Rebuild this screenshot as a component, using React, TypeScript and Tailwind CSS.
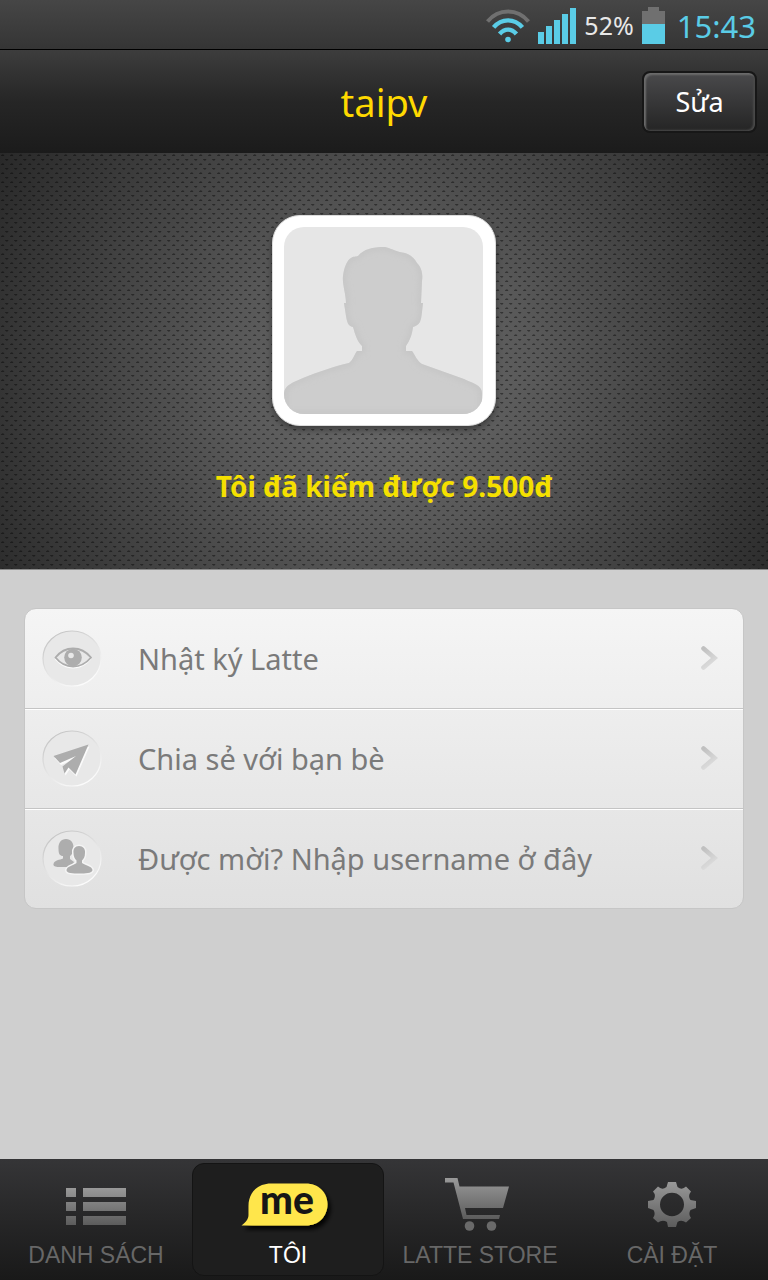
import type { ReactNode } from 'react';
import clsx from 'clsx';

interface MenuItem {
  label: string;
  href: string;
  icon: ReactNode;
}

interface TabItem {
  label: string;
  href: string;
  active?: boolean;
  icon: ReactNode;
}

function WifiIcon() {
  return (
    <svg width="44" height="34" viewBox="0 0 44 34" fill="none" aria-hidden="true">
      <path d="M1.5 12.5C12.5-.8 31.5-.8 42.5 12.5" stroke="#707070" strokeWidth="4" />
      <path d="M7.6 18.4C15.6 9 28.4 9 36.4 18.4" stroke="#5acce6" strokeWidth="4.4" />
      <path d="M13.6 25C18.4 19.2 25.6 19.2 30.4 25" stroke="#5acce6" strokeWidth="4.4" />
      <circle cx="22" cy="30.5" r="2.8" fill="#5acce6" />
    </svg>
  );
}

function SignalIcon() {
  return (
    <svg width="38" height="36" viewBox="0 0 38 36" fill="#5acce6" aria-hidden="true">
      <path d="M0 24h6v12H0zM8 18h6v18H8zM16 12h6v24h-6zM24 6h6v30h-6zM32 0h6v36h-6z" />
    </svg>
  );
}

function BatteryIcon() {
  return (
    <svg width="23" height="37" viewBox="0 0 23 37" aria-hidden="true">
      <path d="M6 0h11v4h6v13H0V4h6z" fill="#707070" />
      <path d="M0 17h23v20H0z" fill="#5acce6" />
    </svg>
  );
}

const personPath =
  'M74 29C80 22 88 20 101 20C109 22 113 25 121 26C127 28 131 32 133 36C138 41 139 48 138 54L137 76H139C138 83 138 90 136 95C134 98 132 99 129 100C128 108 126 113 122 119V124H128C131 128 133 134 138 137L180 152C188 156 198 158 198 166V187H0V166C1 158 8 156 19 151C34 145 51 139 65 136C69 133 70 128 73 124H78V119C73 114 71 107 69 100C64 99 63 95 62 89L60 76H62C62 67 58 57 59 49C60 41 63 33 67 31C69 29 72 30 74 29Z';

function Avatar() {
  return (
    <div className="rounded-[28px] border border-[#dcdcdc] bg-white p-[11px] pr-3 shadow-[0_4px_6px_rgba(0,0,0,0.35)]">
      <svg className="rounded-[20px] bg-[#e6e6e6]" width="199" height="187" viewBox="0 0 199 187" role="img" aria-label="taipv">
        <defs>
          <clipPath id="personClip">
            <path d={personPath} />
          </clipPath>
          <filter id="soft">
            <feGaussianBlur stdDeviation="3" />
          </filter>
        </defs>
        <path d={personPath} fill="#cdcdcd" />
        {/* slightly darker inner edge */}
        <g clipPath="url(#personClip)">
          <path d={personPath} fill="none" stroke="#c2c2c2" strokeWidth="4" filter="url(#soft)" />
        </g>
      </svg>
    </div>
  );
}

// Pressed-in ellipse that holds each menu icon
function IconWell({ children }: { children: ReactNode }) {
  return (
    <svg className="shrink-0" width="60" height="58" viewBox="0 1 60 58" aria-hidden="true">
      <defs>
        <linearGradient id="rim" x1="0.2" y1="0" x2="0.8" y2="1">
          <stop offset="0" stopColor="#c2c2c2" />
          <stop offset="0.5" stopColor="#e4e4e4" />
          <stop offset="1" stopColor="#ffffff" />
        </linearGradient>
      </defs>
      <ellipse cx="30" cy="29.500" rx="29" ry="27.500" fill="#e8e8e8" stroke="url(#rim)" strokeWidth="1.2" />
      {children}
    </svg>
  );
}

function EyeIcon() {
  return (
    <IconWell>
      <path d="M13 29C23 16.5 39 16.5 49 29C39 41 23 41 13 29Z" transform="translate(0 1.5)" fill="#fbfbfb" />
      <path d="M13.5 28.5C23 16.5 39 16.5 49 28.5C39 40.5 23 40.5 13.5 28.5Z" fill="#e8e8e8" stroke="#adadad" strokeWidth="1.8" />
      <circle cx="31" cy="28.5" r="8.8" fill="#adadad" />
      <circle cx="29" cy="26.5" r="2.8" fill="#e8e8e8" />
    </IconWell>
  );
}

const planePath = 'M11.5 27L46.5 15.5L33.5 45.500L26.5 38.5L22.500 44.500L20.500 37.5L34 27L18 34Z';

function PlaneIcon() {
  return (
    <IconWell>
      <path d={planePath} fill="#fbfbfb" transform="translate(1 2)" />
      <path d={planePath} fill="#adadad" />
    </IconWell>
  );
}

const friendBack =
  'M24 10C29 10 31.500 14 31.500 18C31.500 22 30 26 28 27V30L32 33L29 38H17C13 38 11 37 11.500 35C12 31 18 31 21 29.500V27C18 27 16.500 25 16.500 20C16 14 19 10 24 10Z';
const friendFront =
  'M37 17C41 17 43.500 20 43 24C43 28 41.500 30 40 31.500V34C43 36.500 50 37 50.500 41C50 44.500 43 44.500 37.500 44.500C31 44.500 24.500 44.500 24.500 41C25 37 32 36.500 34.500 34V31.500C32.500 30 31.500 27 31.500 24C31 20 33 17 37 17Z';

function FriendsIcon() {
  return (
    <IconWell>
      <path d={friendBack} fill="#adadad" />
      <path d={friendFront} fill="#f4f4f4" stroke="#f4f4f4" strokeWidth="3" />
      <path d={friendFront} fill="#adadad" />
    </IconWell>
  );
}

function Chevron() {
  return (
    <svg className="shrink-0" width="20" height="26" viewBox="0 1 20 26" fill="none" aria-hidden="true">
      <defs>
        <linearGradient id="chev" x1="0" y1="0" x2="0.4" y2="1">
          <stop offset="0" stopColor="#c0c0c0" />
          <stop offset="1" stopColor="#dcdcdc" />
        </linearGradient>
      </defs>
      <path d="M4.500 3.500L15.500 13L4.500 22.500" stroke="url(#chev)" strokeWidth="4.600" strokeLinecap="round" />
    </svg>
  );
}

function TabGradient({ id }: { id: string }) {
  return (
    <defs>
      <linearGradient id={id} x1="0" y1="0" x2="0" y2="1">
        <stop offset="0" stopColor="#999999" />
        <stop offset="1" stopColor="#5c5c5c" />
      </linearGradient>
    </defs>
  );
}

function ListIcon() {
  return (
    <svg width="62" height="56" viewBox="0 0 62 56" aria-hidden="true">
      <TabGradient id="listFill" />
      <path
        fill="url(#listFill)"
        d="M1 11h10v9H1zM18 11h43v9H18zM1 25h10v9H1zM18 25h43v9H18zM1 39h10v9H1zM18 39h43v9H18z"
      />
    </svg>
  );
}

function MeIcon() {
  return (
    <svg width="96" height="56" viewBox="0 0 96 56" aria-hidden="true">
      <defs>
        <filter id="meShadow" x="-20%" y="-20%" width="150%" height="160%">
          <feDropShadow dx="3" dy="4" stdDeviation="2" floodColor="#000" floodOpacity="0.9" />
        </filter>
      </defs>
      <path
        d="M31 6.5H66C78 6.5 87.500 15 87.500 27C87.500 40 78 48.500 66 48.500H1.500C6 45 8.500 42 8.500 38V29C8.500 15 18 6.500 31 6.500Z"
        fill="#ffe64b"
        filter="url(#meShadow)"
      />
      <text x="47" y="37" textAnchor="middle" fontFamily="Lato, sans-serif" fontWeight="900" fontSize="39" fill="#161616">
        me
      </text>
    </svg>
  );
}

function CartIcon() {
  return (
    <svg width="70" height="56" viewBox="0 0 70 56" aria-hidden="true">
      <TabGradient id="cartFill" />
      <path
        fill="url(#cartFill)"
        fillRule="evenodd"
        d="M0 1H12.500L14.500 9.500H64L58 31H20L21.500 38H55L54 42H18L8.500 5.500H0Z"
      />
      <circle cx="24.500" cy="49" r="4.800" fill="#6a6a6a" />
      <circle cx="46.500" cy="49" r="4.800" fill="#6a6a6a" />
    </svg>
  );
}

function GearIcon() {
  return (
    <svg width="50" height="56" viewBox="0 0 50 56" aria-hidden="true">
      <TabGradient id="gearFill" />
      <path
        fill="url(#gearFill)"
        fillRule="evenodd"
        d="M21 5H29L30.5 10Q35 13.5 39 9.5L44 14.5Q40.5 19 43.5 23L49 24V31L43.5 33Q41 37 44 41L39 45.5Q34.5 42.5 30.5 45L29 50H21L20 45Q15.5 42.5 11 45.5L6 41Q9 37 6.5 33L1 31V24L6.5 23Q9.5 18.5 6 14.5L11 9.5Q15 13.5 19.5 10ZM25 15.7a12 11.8 0 1 0 0 23.6a12 11.8 0 1 0 0-23.6Z"
      />
    </svg>
  );
}

const menuItems: MenuItem[] = [
  { label: 'Nhật ký Latte', href: '#diary', icon: <EyeIcon /> },
  { label: 'Chia sẻ với bạn bè', href: '#share', icon: <PlaneIcon /> },
  { label: 'Được mời? Nhập username ở đây', href: '#invited', icon: <FriendsIcon /> },
];

const tabs: TabItem[] = [
  { label: 'DANH SÁCH', href: '#list', icon: <ListIcon /> },
  { label: 'TÔI', href: '#me', active: true, icon: <MeIcon /> },
  { label: 'LATTE STORE', href: '#store', icon: <CartIcon /> },
  { label: 'CÀI ĐẶT', href: '#settings', icon: <GearIcon /> },
];

export default function App() {
  return (
    <div className="flex min-h-screen flex-col bg-[#cfcfcf] font-['Noto_Sans','Open_Sans',sans-serif]">
      {/* Status bar */}
      <div className="flex h-[50px] items-center justify-end border-b border-black bg-linear-to-b from-[#464646] to-[#353535] pt-0.5 pr-3">
        <WifiIcon />
        <span className="ml-2">
          <SignalIcon />
        </span>
        <span className="ml-2 text-[25px] text-[#e8e8e8]">52%</span>
        <span className="ml-2">
          <BatteryIcon />
        </span>
        <time className="ml-3 text-[31px] leading-9 text-[#5acce6]">15:43</time>
      </div>

      {/* Header */}
      <header className="grid h-[103px] grid-cols-3 items-center bg-linear-to-b from-[#3d3d3d] via-[#262626] to-[#1b1b1b] px-[11px]">
        <h1 className="col-start-2 pt-0.5 text-center text-[38px] text-[#ffd900]">taipv</h1>
        <button
          type="button"
          className="h-[62px] w-[115px] justify-self-end rounded-lg border-2 border-[#171717] bg-linear-to-b from-[#4a4a4c] to-[#252525] pt-0.5 text-[27px] text-white shadow-[inset_2px_2px_2px_#6c6c6c,inset_-2px_-1px_2px_#4a4a4a]"
        >
          Sửa
        </button>
      </header>

      {/* Profile */}
      <section className="h-[417px] border-b border-[#8a8a8a] bg-[radial-gradient(ellipse_60%_105%_at_50%_56%,#6a6a6a_0%,#585858_35%,#3e3e3e_70%,#282828_100%)]">
        <div className="flex h-full flex-col items-center bg-[radial-gradient(ellipse_2px_1px_at_30%_25%,rgba(0,0,0,0.42)_60%,transparent),radial-gradient(ellipse_2px_1px_at_75%_75%,rgba(0,0,0,0.42)_60%,transparent)] bg-[size:9px_9px] pt-[62px]">
          <Avatar />
          <p className="mt-10 text-[28px] leading-10 font-bold text-[#f5e000]">Tôi đã kiếm được 9.500đ</p>
        </div>
      </section>

      {/* Menu */}
      <main className="flex-1 px-6 pt-[38px] pb-10">
        <ul className="overflow-hidden rounded-xl border border-[#c6c6c6] bg-linear-to-b from-[#f5f5f5] to-[#e0e0e0]">
          {menuItems.map((item, index) => (
            <li key={item.label} className={clsx(index > 0 && 'border-t border-[#c4c4c4]')}>
              <a
                href={item.href}
                className={clsx(
                  'flex h-[99px] items-center pr-6 pl-[17px] text-[29px] text-[#7a7a7a]',
                  index > 0 && 'border-t border-white',
                )}
              >
                {item.icon}
                <span className="ml-9 flex-1">{item.label}</span>
                <Chevron />
              </a>
            </li>
          ))}
        </ul>
      </main>

      {/* Bottom tabs */}
      <nav className="grid h-[121px] grid-cols-4 bg-linear-to-b from-[#353537] to-[#191919] py-1">
        {tabs.map((tab) => (
          <a
            key={tab.label}
            href={tab.href}
            aria-current={tab.active ? 'page' : undefined}
            className={clsx(
              "flex flex-col items-center rounded-xl border pt-[13px] font-['Liberation_Sans',Arial,sans-serif] text-[23px] leading-7 whitespace-nowrap",
              tab.active ? 'border-[#141414] bg-[#1e1e1e] text-white' : 'border-transparent text-[#676767]',
            )}
          >
            {tab.icon}
            <span className="mt-2">{tab.label}</span>
          </a>
        ))}
      </nav>
    </div>
  );
}
